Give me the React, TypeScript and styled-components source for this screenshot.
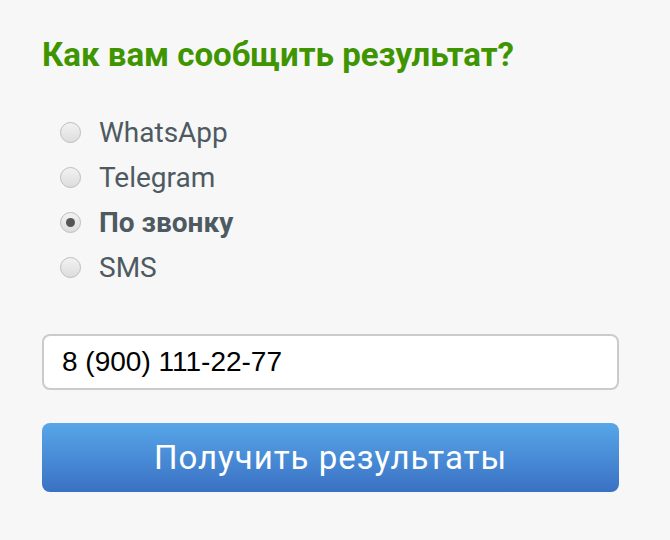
import React, {useState} from 'react';
import styled, {createGlobalStyle} from 'styled-components';

const GlobalStyle = createGlobalStyle`
    html, body {
        margin: 0;
        padding: 0;
        background: #f7f7f7;
    }
`;

const options = ['WhatsApp', 'Telegram', 'По звонку', 'SMS'];

const App = () => {
    const [selected, setSelected] = useState('По звонку');
    const [phone, setPhone] = useState('8 (900) 111-22-77');

    return (
        <Page>
            <GlobalStyle />
            <Form>
                <Title>Как вам сообщить результат?</Title>
                <OptionList>
                    {options.map((opt) => (
                        <Option key={opt} onClick={() => setSelected(opt)}>
                            <Radio $checked={selected === opt} />
                            <OptionLabel $checked={selected === opt}>{opt}</OptionLabel>
                        </Option>
                    ))}
                </OptionList>
                <PhoneInput value={phone} onChange={(e) => setPhone(e.target.value)} />
                <SubmitButton type="button">Получить результаты</SubmitButton>
            </Form>
        </Page>
    );
};

const Page = styled.div`
    width: 670px;
    height: 540px;
    background: #f7f7f7;
    padding: 35px 51px 0 42px;
    box-sizing: border-box;
`;

const Form = styled.div`
    display: flex;
    flex-direction: column;
`;

const Title = styled.h2`
    margin: 0;
    font-family: Roboto, sans-serif;
    font-weight: 700;
    font-size: 33px;
    line-height: 40px;
    color: #3f9500;
`;

const OptionList = styled.div`
    display: flex;
    flex-direction: column;
    margin: 35px 0 0 18px;
`;

const Option = styled.label`
    display: flex;
    align-items: center;
    gap: 18px;
    height: 45px;
    cursor: pointer;
`;

const Radio = styled.span<{$checked: boolean}>`
    width: 21px;
    height: 21px;
    border-radius: 50%;
    box-sizing: border-box;
    border: 1px solid #bdbdbd;
    background: linear-gradient(#f2f2f2, #dddddd);
    display: flex;
    align-items: center;
    justify-content: center;
    &::after {
        content: '';
        width: 9px;
        height: 9px;
        border-radius: 50%;
        background: #555;
        display: ${(p) => (p.$checked ? 'block' : 'none')};
    }
`;

const OptionLabel = styled.span<{$checked: boolean}>`
    font-family: Roboto, sans-serif;
    font-size: 28px;
    font-weight: ${(p) => (p.$checked ? 700 : 400)};
    color: #4e5a61;
`;

const PhoneInput = styled.input`
    margin-top: 44px;
    height: 56px;
    box-sizing: border-box;
    border: 2px solid #cbcbcb;
    border-radius: 8px;
    background: #fff;
    padding: 0 18px;
    font-family: 'Liberation Sans', Arial, sans-serif;
    font-size: 28px;
    color: #000;
    outline: none;
`;

const SubmitButton = styled.button`
    margin-top: 33px;
    height: 69px;
    border: none;
    border-radius: 8px;
    background: linear-gradient(#57a6e9, #3a71c3);
    color: #fff;
    font-family: Roboto, sans-serif;
    font-size: 33px;
    letter-spacing: 1px;
    cursor: pointer;
`;

export default App;
